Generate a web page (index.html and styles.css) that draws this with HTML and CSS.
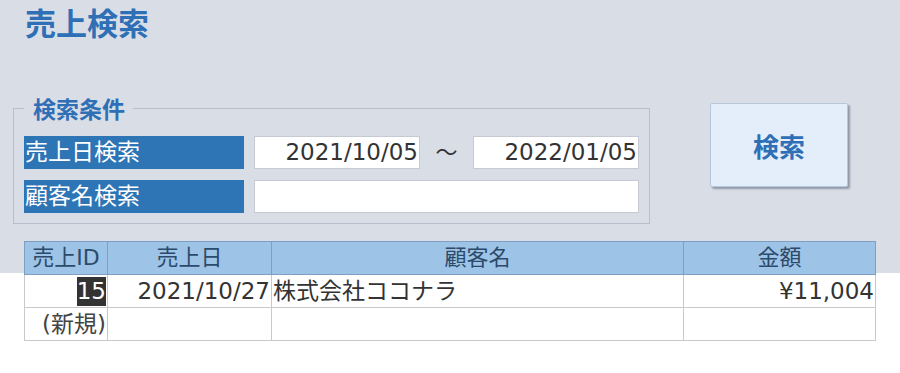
FILE: index.html
```html
<!DOCTYPE html>
<html lang="ja">
<head>
    <meta charset="UTF-8">
    <meta name="viewport" content="width=device-width, initial-scale=1.0">
    <title>売上検索</title>
    <link rel="stylesheet" href="styles.css">
</head>
<body>
    <header class="page-head">
        <h1 class="page-title">売上検索</h1>
    </header>

    <div class="search-area">
        <fieldset class="conditions">
            <legend>検索条件</legend>
            <div class="cond-row">
                <div class="cond-label">売上日検索</div>
                <div class="cond-input date">2021/10/05</div>
                <div class="tilde">～</div>
                <div class="cond-input date">2022/01/05</div>
            </div>
            <div class="cond-row">
                <div class="cond-label">顧客名検索</div>
                <div class="cond-input wide"></div>
            </div>
        </fieldset>
        <button class="search-btn" type="button">検索</button>
    </div>

    <table class="sales-table">
        <colgroup>
            <col class="c-id">
            <col class="c-date">
            <col class="c-name">
            <col class="c-amount">
        </colgroup>
        <thead>
            <tr>
                <th>売上ID</th>
                <th>売上日</th>
                <th>顧客名</th>
                <th>金額</th>
            </tr>
        </thead>
        <tbody>
            <tr>
                <td class="num"><span class="selected">15</span></td>
                <td class="num">2021/10/27</td>
                <td>株式会社ココナラ</td>
                <td class="num">¥11,004</td>
            </tr>
            <tr>
                <td class="num new">(新規)</td>
                <td></td>
                <td></td>
                <td></td>
            </tr>
        </tbody>
    </table>
</body>
</html>
```

FILE: styles.css
```css
body {
    margin: 0;
    font-family: "DejaVu Sans", "Noto Sans CJK JP", sans-serif;
    color: #333;
    background: linear-gradient(#d9dde6 273px, #ffffff 273px);
    height: 373px;
    overflow: hidden;
}

.page-head {
    height: 96px;
    padding-left: 25px;
}

.page-title {
    margin: 0;
    font-family: "Noto Sans CJK JP", sans-serif;
    font-size: 31px;
    line-height: 44px;
    font-weight: bold;
    color: #2e6fb5;
}

.search-area {
    display: flex;
    align-items: flex-start;
    margin-left: 13px;
}

.conditions {
    width: 637px;
    box-sizing: border-box;
    margin: 0;
    padding: 16px 10px 10px 10px;
    border: 1px solid #b8bfcc;
}

.conditions legend {
    margin-left: 0;
    padding: 0 8px 0 9px;
    font-family: "Noto Sans CJK JP", sans-serif;
    font-size: 23px;
    line-height: 24px;
    font-weight: bold;
    color: #2e6fb5;
}

.cond-row {
    display: flex;
    align-items: center;
    height: 33px;
    margin-bottom: 11px;
}

.cond-row:last-child {
    margin-bottom: 0;
}

.cond-label {
    width: 220px;
    height: 33px;
    margin-right: 10px;
    background-color: #2e75b6;
    color: #fff;
    font-size: 23px;
    line-height: 33px;
    padding-left: 1px;
    box-sizing: border-box;
}

.cond-input {
    height: 33px;
    box-sizing: border-box;
    background-color: #fff;
    border: 1px solid #c5cad3;
    font-size: 23px;
    line-height: 31px;
    text-align: right;
    padding-right: 1px;
    color: #333;
}

.cond-input.date {
    width: 166px;
}

.cond-input.wide {
    width: 385px;
}

.tilde {
    width: 53px;
    text-align: center;
    font-size: 22px;
    line-height: 33px;
    color: #333;
}

.search-btn {
    margin: 7px 0 0 60px;
    width: 138px;
    height: 84px;
    background-color: #e4eefb;
    border: 1px solid #b7c6da;
    border-radius: 2px;
    box-shadow: 2px 2px 2px rgba(60, 70, 90, 0.45);
    font-family: "Noto Sans CJK JP", sans-serif;
    font-size: 26px;
    font-weight: bold;
    color: #2e6fb5;
    cursor: pointer;
}

.sales-table {
    margin: 17px 0 0 24px;
    width: 851px;
    border-collapse: collapse;
    table-layout: fixed;
    font-size: 23px;
}

.c-id { width: 83px; }
.c-date { width: 164px; }
.c-name { width: 412px; }
.c-amount { width: 192px; }

.sales-table th {
    height: 32px;
    padding: 0;
    background-color: #9dc3e6;
    border: 1px solid #7f9fc2;
    font-size: 22px;
    font-weight: normal;
    color: #2c4a6b;
    line-height: 30px;
}

.sales-table td {
    height: 33px;
    padding: 0 1px;
    border: 1px solid #c9c9c9;
    line-height: 31px;
    white-space: nowrap;
    box-sizing: border-box;
}

.sales-table td.num {
    text-align: right;
}

.sales-table td.new {
    color: #444;
}

.selected {
    display: inline-block;
    background-color: #333;
    color: #fff;
    line-height: 29px;
    vertical-align: top;
    margin-top: 1px;
}
```
